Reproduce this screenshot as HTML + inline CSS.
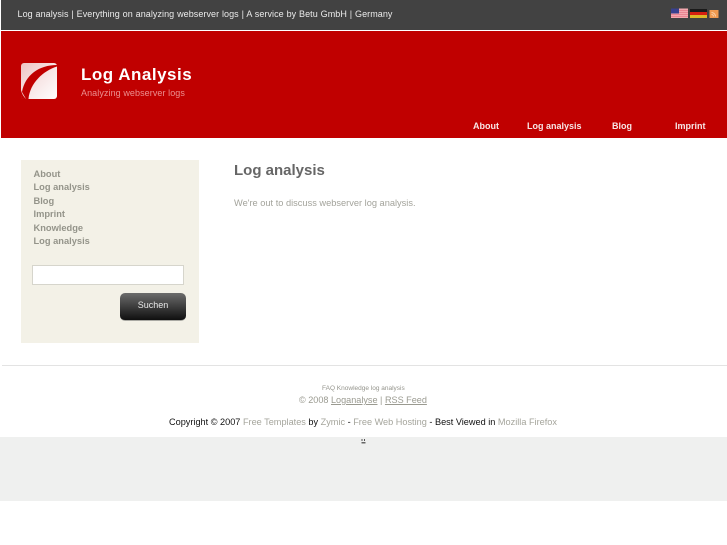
<!DOCTYPE html>
<html>
<head>
<meta charset="utf-8">
<style>
html,body{margin:0;padding:0;background:#fff;}
body{width:727px;height:545px;position:relative;overflow:hidden;font-family:"Liberation Sans",sans-serif;}
.a{position:absolute;white-space:nowrap;}
</style>
</head>
<body>
<div class="a" style="left:1px;top:0;width:726px;height:30px;background:#424242;"></div>
<div class="a" style="left:1px;top:31px;width:726px;height:106.5px;background:#c00000;"></div>
<div class="a" style="left:17.5px;top:9px;font-size:9px;line-height:11px;color:#ebebeb;word-spacing:.3px;letter-spacing:.06px;">Log analysis | Everything on analyzing webserver logs | A service by Betu GmbH | Germany</div>

<svg class="a" style="left:671px;top:8px;" width="55" height="11" viewBox="0 0 55 11">
<rect x="0" y="0.5" width="17" height="9.5" fill="#f4a9b0"/>
<rect x="0" y="2" width="17" height="1" fill="#ea8593"/><rect x="0" y="4" width="17" height="1" fill="#ea8593"/><rect x="0" y="6" width="17" height="1" fill="#ea8593"/><rect x="0" y="8" width="17" height="1" fill="#ea8593"/>
<rect x="0" y="0.5" width="8" height="5" fill="#38408f"/>
<rect x="19" y="1" width="17" height="3" fill="#1a1a1a"/>
<rect x="19" y="4" width="17" height="3" fill="#d51f10"/>
<rect x="19" y="7" width="17" height="3" fill="#dcb828"/>
<rect x="38.5" y="2" width="9" height="8" fill="#f09a50"/>
<path d="M40.5 4.5a4 4 0 0 1 4 4M40.5 6.5a2 2 0 0 1 2 2" fill="none" stroke="#fbd2ac" stroke-width="1"/>
</svg>

<svg class="a" style="left:21px;top:63px;" width="36" height="36" viewBox="0 0 36 36">
<defs><linearGradient id="g" x1="0" y1="0" x2="1" y2="1"><stop offset="0" stop-color="#eec4c4"/><stop offset=".55" stop-color="#f8e8e8"/><stop offset="1" stop-color="#fff"/></linearGradient></defs>
<rect width="36" height="36" rx="3" fill="url(#g)"/>
<path d="M36 2C18 2 4 12 1 29L5 36H7.5C9 20 22 8 36 3.5Z" fill="#c00000"/>
<path d="M0 27Q1 32 5 36H3Q0 36 0 33Z" fill="#c00000"/>
</svg>

<div class="a" style="left:81px;top:65px;font-size:17px;line-height:20px;font-weight:bold;color:#fff;letter-spacing:.5px;">Log Analysis</div>
<div class="a" style="left:81px;top:88px;font-size:9px;line-height:11px;color:#eb8f8f;letter-spacing:.08px;">Analyzing webserver logs</div>

<div class="a" style="left:473px;top:121px;font-size:9px;line-height:11px;font-weight:bold;color:#f7e6e6;">About</div>
<div class="a" style="left:527px;top:121px;font-size:9px;line-height:11px;font-weight:bold;color:#f7e6e6;">Log analysis</div>
<div class="a" style="left:612px;top:121px;font-size:9px;line-height:11px;font-weight:bold;color:#f7e6e6;">Blog</div>
<div class="a" style="left:675px;top:121px;font-size:9px;line-height:11px;font-weight:bold;color:#f7e6e6;">Imprint</div>

<div class="a" style="left:21px;top:160px;width:178px;height:183px;background:#f3f1e7;"></div>
<div class="a" style="left:33.5px;top:168px;font-size:9.3px;line-height:13.4px;font-weight:bold;color:#94948a;">About<br>Log analysis<br>Blog<br>Imprint<br>Knowledge<br>Log analysis</div>
<div class="a" style="left:32px;top:265px;width:150px;height:18px;background:#fff;border:1px solid #d6d5cc;"></div>
<div class="a" style="left:120px;top:293px;width:66px;height:27px;border-radius:5px;background:linear-gradient(#6c6c6c,#0f0f0f);border-bottom:1px solid #a9a9a3;text-align:center;font-size:9px;line-height:24px;color:#e8e8e8;">Suchen</div>

<div class="a" style="left:234px;top:160.5px;font-size:15px;line-height:19px;font-weight:bold;color:#666;">Log analysis</div>
<div class="a" style="left:234px;top:197px;font-size:9.25px;line-height:12px;color:#a3a39b;">We're out to discuss webserver log analysis.</div>

<div class="a" style="left:2px;top:365px;width:725px;height:1px;background:#e3e3e3;"></div>

<div class="a" style="left:322px;top:384px;font-size:6.5px;line-height:9px;color:#94948c;">FAQ Knowledge log analysis</div>
<div class="a" style="left:299px;top:394px;font-size:9.1px;line-height:12px;color:#9a9a90;">© 2008 <span style="text-decoration:underline;">Loganalyse</span> | <span style="text-decoration:underline;">RSS Feed</span></div>
<div class="a" style="left:169px;top:416px;font-size:9.17px;line-height:12px;color:#111;">Copyright © 2007 <span style="color:#a5a59c;">Free Templates</span> by <span style="color:#a5a59c;">Zymic</span> - <span style="color:#a5a59c;">Free Web Hosting</span> - Best Viewed in <span style="color:#a5a59c;">Mozilla Firefox</span></div>

<div class="a" style="left:0;top:437px;width:727px;height:64px;background:#eff0ef;"></div>
<svg class="a" style="left:361px;top:439px;" width="5" height="6" viewBox="0 0 5 6">
<path d="M1 0V2M3.5 0V2" stroke="#555" stroke-width="1"/>
<path d="M.5 3H4.5V4.5H.5Z" fill="#666"/>
</svg>
</body>
</html>
